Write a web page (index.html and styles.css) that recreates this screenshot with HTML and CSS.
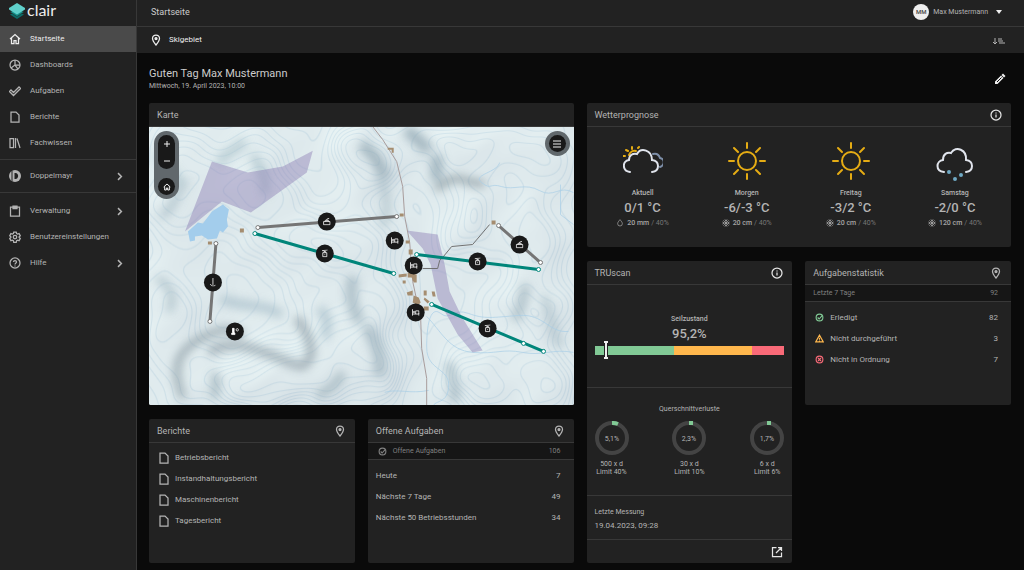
FILE: index.html
```
<!DOCTYPE html>
<html lang="de">
<head>
  <meta charset="UTF-8">
  <meta name="viewport" content="width=device-width, initial-scale=1">
  <title>clair - Startseite</title>
  <link rel="stylesheet" href="styles.css">
</head>
<body>
  <!-- Icons -->
  <svg class="sprite" aria-hidden="true">
    <symbol id="i-home" viewBox="0 0 24 24"><path d="M2 12 12 3l10 9M5 10v11h5v-6h4v6h5V10" /></symbol>
    <symbol id="i-pie" viewBox="0 0 24 24"><circle cx="12" cy="12" r="10" /><path d="M12 2v10l-8 6M12 12h10M12 12l6 8" /></symbol>
    <symbol id="i-check" viewBox="0 0 24 24"><path d="m1 13 3-3 5 5L20 4l3 3L9 21z" /></symbol>
    <symbol id="i-file" viewBox="0 0 24 24"><path d="M4 2h10l6 6v14H4z" /></symbol>
    <symbol id="i-books" viewBox="0 0 24 24"><path d="M2 3h7v18H2zM13 2v20M16 3l6 19" /></symbol>
    <symbol id="i-clip" viewBox="0 0 24 24"><path d="M3 4h18v18H3z" /><path d="M8 2h8v5H8z" fill="currentColor" /></symbol>
    <symbol id="i-gear" viewBox="0 0 24 24"><circle cx="12" cy="12" r="3.5" /><path d="M9.500 2h5l.7 3 2 1.200 3-1 2.300 4.300-2.300 2v1.500l2.300 2-2.300 4.300-3-1-2 1.200-.7 3h-5l-.7-3-2-1.200-3 1L1.500 15l2.300-2v-1.500l-2.300-2 2.300-4.300 3 1 2-1.200z" /></symbol>
    <symbol id="i-help" viewBox="0 0 24 24"><circle cx="12" cy="12" r="10" /><path d="M9 10c0-4 6-4 6 0 0 2-3 2-3 5M12 17v2" /></symbol>
    <symbol id="i-pin" viewBox="0 0 24 24"><path d="M12 22C8 17 5 13 5 9a7 7 0 0 1 14 0c0 4-3 8-7 13z" /><circle cx="12" cy="9" r="2" fill="currentColor" /></symbol>
    <symbol id="i-info" viewBox="0 0 24 24"><circle cx="12" cy="12" r="10" /><path d="M12 11v6M12 7v2" /></symbol>
    <symbol id="i-right" viewBox="0 0 24 24"><path d="m8 3 9 9-9 9" /></symbol>
    <symbol id="i-done" viewBox="0 0 24 24"><circle cx="12" cy="12" r="9" /><path d="m7 12 4 4 8-9" /></symbol>
    <symbol id="i-warn" viewBox="0 0 24 24"><path d="M12 3 2 21h20zM12 10v5M12 17v2" /></symbol>
    <symbol id="i-fail" viewBox="0 0 24 24"><circle cx="12" cy="12" r="9" /><path d="m8 8 8 8M16 8l-8 8" /></symbol>
    <symbol id="i-drop" viewBox="0 0 24 24"><path d="M12 2c4 5 7 8 7 12a7 7 0 0 1-14 0c0-4 3-7 7-12z" /></symbol>
    <symbol id="i-flake" viewBox="0 0 24 24"><path d="M12 1v22M1 12h22M4 4l16 16M20 4 4 20M8 2l4 4 4-4M8 22l4-4 4 4M2 8l4 4-4 4M22 8l-4 4 4 4" /></symbol>
    <symbol id="i-open" viewBox="0 0 24 24"><path d="M11 3H3v18h18v-8M14 3h7v7M21 3 10 14" /></symbol>
    <symbol id="i-sun" viewBox="0 0 40 40"><circle cx="20" cy="20" r="9" /><path d="M20 2v5M20 33v5M2 20h5M33 20h5M7 7l4 4M29 29l4 4M33 7l-4 4M11 29l-4 4" /></symbol>
    <!-- Kartensymbole -->
    <symbol id="m-hotel" viewBox="0 0 10 10"><path d="M1 1v8M1 7h8V3H5v4M9 6v3" /><circle cx="3" cy="4.500" r="1" /></symbol>
    <symbol id="m-gondola" viewBox="0 0 10 10"><path d="M2.500 4h5v5h-5zM4 4V2.500h2V4M1.500 1.500l7-1M5 6v1" /></symbol>
    <symbol id="m-chair" viewBox="0 0 10 10"><path d="M1 5h8v4H1zM3 5V3.500h4V5M5 3.500V2l3-1" /></symbol>
    <symbol id="m-tbar" viewBox="0 0 10 10"><path d="M5 0v8M2 7c0 3 6 3 6 1M4 0h2" /></symbol>
    <symbol id="m-temp" viewBox="0 0 10 10"><path d="M2 1h2v5l1 1v2H1V7l1-1z" fill="#fff" /><circle cx="8" cy="3" r="1.500" /></symbol>
  </svg>

  <div class="app">
    <aside class="sidebar">
      <a class="brand" href="#">
        <svg class="brand-mark" viewBox="0 0 16 16">
          <path d="M1 11.500 8 16l7-4.500-7-3z" fill="#0c6b68" />
          <path d="M1 9 8 13.500 15 9 8 6z" fill="#149089" stroke="#222" stroke-width=".5" />
          <path d="M0 5 8 0l8 5v1.500L8 11.500 0 6.500z" fill="#5fd0cb" />
        </svg>
        <span class="brand-name">clair</span>
      </a>
      <nav>
        <ul class="menu">
          <li><a class="active" href="#"><svg class="icon"><use href="#i-home" /></svg>Startseite</a></li>
          <li><a href="#"><svg class="icon"><use href="#i-pie" /></svg>Dashboards</a></li>
          <li><a href="#"><svg class="icon"><use href="#i-check" /></svg>Aufgaben</a></li>
          <li><a href="#"><svg class="icon"><use href="#i-file" /></svg>Berichte</a></li>
          <li><a href="#"><svg class="icon"><use href="#i-books" /></svg>Fachwissen</a></li>
        </ul>
        <ul class="menu">
          <li><a href="#"><svg class="icon" viewBox="0 0 24 24"><circle cx="12" cy="12" r="12" fill="currentColor" stroke="none" /><path d="M6 1v22" stroke="#222" stroke-width="2" /><path d="M11 6h2c7 0 7 12 0 12h-2z" fill="#222" stroke="none" /></svg>Doppelmayr<svg class="arrow"><use href="#i-right" /></svg></a></li>
        </ul>
        <ul class="menu">
          <li><a href="#"><svg class="icon"><use href="#i-clip" /></svg>Verwaltung<svg class="arrow"><use href="#i-right" /></svg></a></li>
          <li><a href="#"><svg class="icon"><use href="#i-gear" /></svg>Benutzereinstellungen</a></li>
          <li><a href="#"><svg class="icon"><use href="#i-help" /></svg>Hilfe<svg class="arrow"><use href="#i-right" /></svg></a></li>
        </ul>
      </nav>
    </aside>

    <div class="page">
      <header class="topbar">
        <span class="topbar-title">Startseite</span>
        <button class="user" type="button">
          <span class="avatar">MM</span>
          Max Mustermann
          <svg class="caret" viewBox="0 0 6 4"><path d="M0 0h6L3 4z" /></svg>
        </button>
      </header>
      <div class="subbar">
        <button class="region" type="button"><svg class="icon"><use href="#i-pin" /></svg>Skigebiet</button>
        <button class="sort" type="button" aria-label="Sortieren">
          <svg viewBox="0 0 12 10"><path d="M2 3v6M0 7l2 2 2-2" /><path d="M5 4h4M5 6h5M6 8h6" /></svg>
        </button>
      </div>

      <main class="content">
        <div class="welcome">
          <div>
            <h1>Guten Tag Max Mustermann</h1>
            <p>Mittwoch, 19. April 2023, 10:00</p>
          </div>
          <button class="edit" type="button" aria-label="Bearbeiten">
            <svg viewBox="0 0 24 24"><path d="M2 22v-5L14 5l5 5L7 22zM15 4l3-3 5 5-3 3z" fill="currentColor" /><path d="m6 18 9-9" stroke="#0a0a0a" stroke-width="2" /></svg>
          </button>
        </div>

        <div class="grid">
          <section class="card card-map">
            <h2 class="card-head">Karte</h2>
            <div class="map">
              <canvas id="terrain" width="425" height="279"></canvas>
              <svg class="map-layer" viewBox="0 0 425 279" preserveAspectRatio="xMidYMid slice">
                <defs>
                  <filter id="soft" x="-30%" y="-30%" width="160%" height="160%"><feGaussianBlur stdDeviation="5" /></filter>
                </defs>
                <!-- Schattierung -->
                <g class="shade" filter="url(#soft)">
                  <path d="M34 272C22 240 28 225 52 212s34-9 42-4" stroke="#7f9099" stroke-width="7" />
                  <path d="M60 226c20-14 44-5 68 5s28 14 34-2c2-12-4-22-14-38" stroke="#83939c" stroke-width="8" />
                  <path d="M72 172c20 10 50 4 60 18M170 182c10 8 10 14 6 30" stroke="#a2bac6" stroke-width="9" />
                  <path d="M65 272c2-10 4-16 0-26M194 246c-6 14-16 18-26 24" stroke="#93a8b2" stroke-width="8" />
                  <path d="M286 62c12-4 16-12 24-10s14 4 26 6" stroke="#6f7f86" stroke-width="6" />
                  <path d="M212 18c14 8 20 20 24 34M258 2c8 10 16 14 22 22M288 28v26" stroke="#8ba2ae" stroke-width="12" />
                  <path d="M216 200c12 12 18 34 14 50M204 150c-4 20 0 34 8 46" stroke="#9cb1bc" stroke-width="12" />
                  <path d="M300 236c4 16 8 26 6 40M378 158c-6 14-2 20-12 36" stroke="#9fb3bd" stroke-width="10" />
                  <path d="M8 28c14 10 16 26 30 30M96 14c-8 10-20 12-26 22M104 28c8 14 14 22 12 40" stroke="#a7bfc8" stroke-width="9" />
                  <path d="M8 152c16 8 18 20 12 34M12 90c10-4 16-20 20-32" stroke="#a0b6c0" stroke-width="7" />
                  <path d="M234 100c8-20 2-40-4-52M395 170c10 20 8 40 18 50" stroke="#a9bdc6" stroke-width="8" />
                </g>
                <!-- Gewässer -->
                <path class="stream" d="M425 66c-14-8-20 6-34-2s-26 0-38-4-10 4-20-4 16-10 18-20" />
                <path class="stream" d="M420 205c-20 2-24-18-50-16s-34 4-50-2-18 8-28 0-14 10-14 34 24 20 22 40-18 10-16 24" />
                <path class="stream" d="M278 190c14 14 22 34 46 36s30-4 50 0 30-4 51 0M236 266c12-4 26 2 44-2M412 58v30l13 10" />
                <path class="lake" d="m39 105 10-9 5 1 9-12 11-7 6 5-2 10 1 7-5 6-3-2-3 8-9 1-6-4-7 1v4l-5 1z" />
                <!-- Zonen -->
                <path class="zone" d="m63 35 36 11 35-6 30-16-6 22-56 40-29-11-37 30z" />
                <path class="zone" d="m258 104 31 4 7 30 5 27 12 25 21 34-10 2-15-18-20-36-7-34-8-16z" />
                <path class="road" d="M224 0l10 13 14 22 6 25 2 30 5 26 3 39 8 37 1 30 5 30v27" />
                <path class="border" d="M274 142h15l2-8 3-3 9-11 21-2 17-20" />
                <!-- Gebäude -->
                <path class="house" d="M239 21h6v5h-2v-3h-4zM251 87h4v3h-4zM257 114h4v3h-4zM260 123h4v5h-4zM343 94h4v4h-4zM91 102h4v4h-4zM59 115h4v3h-4zM250 148l8-1v3l-8 1zM259 146l9 2v8h-3l-2-5h-4zM254 154h3v3h-3zM258 166l6-2v5h-5zM265 169l5 2 2 5-3 3-5-3zM275 164h3v5h-3zM283 165h3l1 5h-3zM276 171l5 4-2 2-4-4zM275 180h5v4h-5zM262 142h8v3h-8z" />
                <!-- Anlagen -->
                <g class="lift">
                  <path d="M109 101 248 90M67 117l-6 78M350 99l42 37" />
                  <g><circle cx="109" cy="101" r="2" /><circle cx="248" cy="90" r="2" /><circle cx="67" cy="117" r="2" /><circle cx="61" cy="195" r="2" /><circle cx="350" cy="99" r="2" /><circle cx="392" cy="136" r="2" /></g>
                </g>
                <g class="lift lift-open">
                  <path d="m106 107 139 40M268 128l122 15M283 178l112 47" />
                  <g><circle cx="106" cy="107" r="2" /><circle cx="245" cy="147" r="2" /><circle cx="268" cy="128" r="2" /><circle cx="390" cy="143" r="2" /><circle cx="283" cy="178" r="2" /><circle cx="375" cy="217" r="2" /><circle cx="395" cy="225" r="2" /></g>
                </g>
                <g class="marker">
                  <circle cx="178" cy="95" r="9" /><use href="#m-chair" x="174" y="91" width="8" height="8" />
                  <circle cx="176" cy="127" r="9" /><use href="#m-gondola" x="172" y="123" width="8" height="8" />
                  <circle cx="64" cy="156" r="9" /><use href="#m-tbar" x="60" y="152" width="8" height="8" />
                  <circle cx="86" cy="205" r="9" /><use href="#m-temp" x="82" y="201" width="8" height="8" />
                  <circle cx="246" cy="114" r="9" /><use href="#m-hotel" x="242" y="110" width="8" height="8" />
                  <circle cx="265" cy="139" r="9" /><use href="#m-hotel" x="261" y="135" width="8" height="8" />
                  <circle cx="267" cy="186" r="9" /><use href="#m-hotel" x="263" y="182" width="8" height="8" />
                  <circle cx="371" cy="118" r="9" /><use href="#m-chair" x="367" y="114" width="8" height="8" />
                  <circle cx="329" cy="135" r="9" /><use href="#m-gondola" x="325" y="131" width="8" height="8" />
                  <circle cx="339" cy="202" r="9" /><use href="#m-gondola" x="335" y="198" width="8" height="8" />
                </g>
              </svg>
              <div class="map-tools">
                <div class="zoom">
                  <button type="button" aria-label="Vergrößern"><svg viewBox="0 0 6 6"><path d="M3 0v6M0 3h6" /></svg></button>
                  <button type="button" aria-label="Verkleinern"><svg viewBox="0 0 6 6"><path d="M0 3h6" /></svg></button>
                </div>
                <button class="round" type="button" aria-label="Zurücksetzen"><svg class="home"><use href="#i-home" /></svg></button>
              </div>
              <div class="map-tools map-menu">
                <button class="round" type="button" aria-label="Menü"><svg viewBox="0 0 8 8"><path d="M0 1h8M0 4h8M0 7h8" /></svg></button>
              </div>
            </div>
          </section>

          <section class="card card-weather">
            <h2 class="card-head">Wetterprognose <svg class="icon bright"><use href="#i-info" /></svg></h2>
            <div class="forecast">
              <div class="day">
                <svg class="weather" viewBox="0 0 40 40">
                  <path class="sun" d="M6 14a6 6 0 0 1 7-4" />
                  <path class="sun rays" d="M9 6v2M3 9l2 1M0 15h2M15 7l1-1" />
                  <path class="cloud-back" d="M30 13c4-1 6 1 7 4 5 1 5 7 0 9" />
                  <path class="cloud" d="M7 31c-8-1-8-11-1-12 0-5 4-7 8-6 4-7 15-4 15 6 8 1 8 11 0 12" />
                </svg>
                <h3>Aktuell</h3>
                <strong>0/1 °C</strong>
                <p><svg><use href="#i-drop" /></svg><b>20 mm</b> / 40%</p>
              </div>
              <div class="day">
                <svg class="weather sun"><use href="#i-sun" /></svg>
                <h3>Morgen</h3>
                <strong>-6/-3 °C</strong>
                <p><svg><use href="#i-flake" /></svg><b>20 cm</b> / 40%</p>
              </div>
              <div class="day">
                <svg class="weather sun"><use href="#i-sun" /></svg>
                <h3>Freitag</h3>
                <strong>-3/2 °C</strong>
                <p><svg><use href="#i-flake" /></svg><b>20 cm</b> / 40%</p>
              </div>
              <div class="day">
                <svg class="weather" viewBox="0 0 40 40">
                  <path class="cloud" d="M9 31c-9-1-8-11-1-12 0-6 4-8 8-7 5-8 16-3 15 7 8 1 8 11 0 12" />
                  <g class="snow"><circle cx="14" cy="31" r="1" /><circle cx="26" cy="34" r="1" /><circle cx="20" cy="38" r="1" /></g>
                </svg>
                <h3>Samstag</h3>
                <strong>-2/0 °C</strong>
                <p><svg><use href="#i-flake" /></svg><b>120 cm</b> / 40%</p>
              </div>
            </div>
          </section>

          <section class="card card-scan">
            <h2 class="card-head">TRUscan <svg class="icon bright"><use href="#i-info" /></svg></h2>
            <div class="rope">
              <h3>Seilzustand</h3>
              <strong>95,2%</strong>
              <div class="scale">
                <span class="good"></span><span class="medium"></span><span class="bad"></span>
                <svg class="pointer" viewBox="0 0 6 18"><path d="M1 1h4M1 17h4M3 1v16" stroke="#222" stroke-width="4" /><path d="M1 1h4M1 17h4M3 1v16" stroke="#eee" stroke-width="2" /></svg>
              </div>
            </div>
            <div class="losses">
              <h3>Querschnittverluste</h3>
              <div class="rings">
                <div class="loss">
                  <svg viewBox="0 0 34 34"><circle cx="17" cy="17" r="15" /><path d="M17 2a15 15 0 0 1 6 1" /><text x="17" y="20">5,1%</text></svg>
                  <p>500 x d<br>Limit 40%</p>
                </div>
                <div class="loss">
                  <svg viewBox="0 0 34 34"><circle cx="17" cy="17" r="15" /><path d="M17 2h4" /><text x="17" y="20">2,3%</text></svg>
                  <p>30 x d<br>Limit 10%</p>
                </div>
                <div class="loss">
                  <svg viewBox="0 0 34 34"><circle cx="17" cy="17" r="15" /><path d="M17 2h4" /><text x="17" y="20">1,7%</text></svg>
                  <p>6 x d<br>Limit 6%</p>
                </div>
              </div>
            </div>
            <div class="measured">
              <h3>Letzte Messung</h3>
              <p>19.04.2023, 09:28</p>
            </div>
            <footer class="card-foot">
              <a href="#" aria-label="TRUscan öffnen"><svg class="icon bright"><use href="#i-open" /></svg></a>
            </footer>
          </section>

          <section class="card">
            <h2 class="card-head">Aufgabenstatistik <svg class="icon"><use href="#i-pin" /></svg></h2>
            <div class="card-sub"><span>Letzte 7 Tage</span><span>92</span></div>
            <table>
              <tr><th scope="row"><svg class="state ok"><use href="#i-done" /></svg>Erledigt</th><td>82</td></tr>
              <tr><th scope="row"><svg class="state warn"><use href="#i-warn" /></svg>Nicht durchgeführt</th><td>3</td></tr>
              <tr><th scope="row"><svg class="state fail"><use href="#i-fail" /></svg>Nicht in Ordnung</th><td>7</td></tr>
            </table>
          </section>

          <section class="card">
            <h2 class="card-head">Berichte <svg class="icon"><use href="#i-pin" /></svg></h2>
            <ul class="reports">
              <li><a href="#"><svg class="icon"><use href="#i-file" /></svg>Betriebsbericht</a></li>
              <li><a href="#"><svg class="icon"><use href="#i-file" /></svg>Instandhaltungsbericht</a></li>
              <li><a href="#"><svg class="icon"><use href="#i-file" /></svg>Maschinenbericht</a></li>
              <li><a href="#"><svg class="icon"><use href="#i-file" /></svg>Tagesbericht</a></li>
            </ul>
          </section>

          <section class="card">
            <h2 class="card-head">Offene Aufgaben <svg class="icon"><use href="#i-pin" /></svg></h2>
            <div class="card-sub"><svg class="state"><use href="#i-done" /></svg><span>Offene Aufgaben</span><span>106</span></div>
            <table>
              <tr><th scope="row">Heute</th><td>7</td></tr>
              <tr><th scope="row">Nächste 7 Tage</th><td>49</td></tr>
              <tr><th scope="row">Nächste 50 Betriebsstunden</th><td>34</td></tr>
            </table>
          </section>
        </div>
      </main>
    </div>
  </div>

  <script src="terrain.js"></script>
</body>
</html>
```
FILE: styles.css
```
* {
  box-sizing: border-box;
}

body {
  margin: 0;
  background: #0a0a0a;
  color: #b4b4b4;
  font-family: Roboto, "Liberation Sans", sans-serif;
  font-size: 8px;
  line-height: 12px;
}

h1, h2, h3, p, ul {
  margin: 0;
  padding: 0;
  font-weight: 400;
}

ul {
  list-style: none;
}

a {
  color: inherit;
  text-decoration: none;
}

button {
  padding: 0;
  border: 0;
  background: none;
  color: inherit;
  font: inherit;
  cursor: pointer;
}

svg {
  display: block;
  flex: none;
  fill: none;
  stroke: currentColor;
  stroke-width: 2;
}

.sprite {
  position: absolute;
  width: 0;
  height: 0;
}

.icon {
  width: 12px;
  height: 12px;
  stroke-width: 2.5;
}

.bright {
  color: #e6e6e6;
}

.app {
  display: flex;
  min-height: 100vh;
}

/* Seitenleiste */
.sidebar {
  flex: none;
  width: 137px;
  background: #222;
  border-right: 1px solid #383838;
}

.brand {
  display: flex;
  align-items: center;
  gap: 2px;
  height: 26px;
  padding: 0 0 4px 9px;
  color: #eee;
}

.brand-mark {
  width: 16px;
  height: 16px;
  stroke: none;
}

.brand-name {
  padding-bottom: 2px;
  font-family: Lato, sans-serif;
  font-size: 16px;
  line-height: 16px;
}

.menu {
  padding: 3px 0;
  border-bottom: 1px solid #383838;
}

.menu:first-child {
  padding-top: 0;
}

.menu:last-child {
  padding-top: 5px;
  border-bottom: 0;
}

.menu a {
  display: flex;
  align-items: center;
  gap: 9px;
  height: 26px;
  padding: 0 12px 0 9px;
}

.menu .active {
  background: #4a4a4a;
  color: #eee;
}

.arrow {
  width: 9px;
  height: 9px;
  margin-left: auto;
  stroke-width: 4;
}

/* Kopfzeilen */
.page {
  flex: 1;
  min-width: 0;
}

.topbar,
.subbar {
  display: flex;
  align-items: center;
  justify-content: space-between;
  height: 26px;
  padding: 0 22px 0 14px;
  background: #222;
}

.topbar {
  height: 27px;
  padding-bottom: 2px;
  border-bottom: 1px solid #383838;
}

.topbar-title {
  color: #ccc;
  font-size: 9px;
}

.user {
  display: flex;
  align-items: center;
  gap: 4px;
  font-size: 7px;
}

.avatar {
  width: 16px;
  height: 16px;
  border-radius: 50%;
  background: #eee;
  color: #444;
  font-size: 6px;
  font-weight: 500;
  line-height: 16px;
}

.caret {
  width: 6px;
  height: 4px;
  margin-left: 4px;
  fill: #eee;
  stroke: none;
}

.region {
  display: flex;
  align-items: center;
  gap: 7px;
  color: #eee;
}

.region .icon {
  margin-left: -1px;
}

.sort svg {
  width: 12px;
  height: 10px;
  margin-right: -3px;
  stroke-width: 1;
}

/* Inhalt */
.content {
  padding: 14px 13px 7px 12px;
}

.welcome {
  display: flex;
  justify-content: space-between;
  align-items: center;
  height: 24px;
  margin-bottom: 12px;
  padding-right: 5px;
}

.welcome h1 {
  color: #ccc;
  font-size: 11px;
  line-height: 14px;
}

.welcome p {
  font-size: 7px;
  line-height: 10px;
}

.edit svg {
  width: 12px;
  height: 12px;
  color: #eee;
  stroke: none;
}

.grid {
  display: grid;
  grid-template-columns: repeat(4, minmax(0, 1fr));
  grid-auto-rows: minmax(144px, auto);
  gap: 14px 13px;
}

.card {
  display: flex;
  flex-direction: column;
  background: #222;
  border-radius: 2px;
  overflow: hidden;
}

.card-map {
  grid-column: span 2;
  grid-row: span 2;
}

.card-weather {
  grid-column: span 2;
}

.card-scan {
  grid-row: span 2;
}

.card-head {
  display: flex;
  align-items: center;
  justify-content: space-between;
  flex: none;
  height: 24px;
  padding: 0 9px 0 8px;
  border-bottom: 1px solid #383838;
  font-size: 9px;
}

.card-sub {
  display: flex;
  align-items: center;
  gap: 6px;
  height: 17px;
  padding: 0 13px 0 8px;
  background: #161616;
  border-bottom: 1px solid #383838;
  color: #808080;
  font-size: 7px;
}

.card-sub span:last-child {
  margin-left: auto;
}

.card-sub .state {
  margin-left: 2px;
}

.state {
  width: 9px;
  height: 9px;
  stroke-width: 3;
}

.ok { color: #81c995; }
.warn { color: #ffb74d; }
.fail { color: #f96a78; }

table {
  width: 100%;
  margin-top: 5px;
  border-collapse: collapse;
}

th, td {
  height: 21px;
  padding: 0 13px 0 8px;
  font-weight: 400;
  text-align: left;
}

td {
  text-align: right;
}

th .state {
  display: inline-block;
  margin: 0 6px 0 2px;
  vertical-align: -2px;
}

.reports {
  padding: 4px 9px;
}

.reports a {
  display: flex;
  align-items: center;
  gap: 5px;
  height: 21px;
}

/* Karte */
.map {
  position: relative;
  flex: 1;
  background: #dfe9ec;
}

#terrain,
.map-layer {
  position: absolute;
  width: 100%;
  height: 100%;
}

.shade {
  opacity: .7;
}

.stream {
  stroke: #a9cfe6;
  stroke-width: 1;
  opacity: .7;
}

.lake {
  fill: #a3cdec;
  stroke: none;
}

.zone {
  fill: #8878b0;
  fill-opacity: .42;
  stroke: none;
}

.road {
  stroke: #a89c9c;
  stroke-width: 1;
}

.border {
  stroke: #707070;
  stroke-width: 1;
}

.house {
  fill: #a58d70;
  stroke: none;
}

.lift {
  stroke: #757575;
  stroke-width: 3;
}

.lift-open {
  stroke: #00857a;
}

.lift circle {
  fill: #fff;
  stroke-width: 1;
}

.marker {
  color: #fff;
  stroke-width: 1;
}

.marker circle {
  fill: #191919;
  stroke: none;
}

.map-tools {
  position: absolute;
  top: 4px;
  left: 5px;
  padding: 4px;
  border-radius: 13px;
  background: #61686c;
}

.map-menu {
  left: auto;
  right: 4px;
}

.map-tools button {
  display: flex;
  align-items: center;
  justify-content: center;
  width: 17px;
  height: 17px;
  color: #eee;
}

.map-tools svg {
  width: 6px;
  height: 6px;
  stroke-width: 1;
}

.map-tools .home {
  width: 8px;
  height: 8px;
  stroke-width: 3;
}

.map-menu svg {
  width: 8px;
  height: 8px;
}

.zoom {
  margin-bottom: 9px;
  border-radius: 9px;
  background: #191919;
}

.round {
  border-radius: 50%;
  background: #191919;
}

/* Wetter */
.forecast {
  display: grid;
  grid-template-columns: repeat(4, 1fr);
  padding: 14px 4px 13px;
}

.day {
  display: flex;
  flex-direction: column;
  align-items: center;
}

.weather {
  width: 40px;
  height: 40px;
  margin-bottom: 6px;
  stroke-linecap: round;
}

.sun { stroke: #e5ac14; }
.cloud { stroke: #e0e4ec; }
.cloud-back { stroke: #7d8ea8; }

.snow {
  stroke: #6fa9c4;
}

.day h3,
.rope h3 {
  font-size: 7px;
  font-weight: 500;
}

.day strong,
.rope strong {
  font-size: 13px;
  font-weight: 500;
  line-height: 18px;
}

.day p {
  display: flex;
  align-items: center;
  gap: 2px;
  color: #777;
  font-size: 7px;
}

.day p svg {
  width: 8px;
  height: 8px;
  margin-right: 1px;
  color: #b4b4b4;
}

.day b {
  color: #a6a6a6;
  font-weight: 500;
}

/* TRUscan */
.rope {
  flex: 1;
  padding: 28px 8px;
  text-align: center;
}

.scale {
  position: relative;
  display: flex;
  height: 9px;
  margin-top: 3px;
}

.good { flex: 42; background: #81c995; }
.medium { flex: 41; background: #ffb74d; }
.bad { flex: 17; background: #f96a78; }

.pointer {
  position: absolute;
  top: -5px;
  left: 8px;
  width: 6px;
  height: 18px;
}

.losses {
  height: 108px;
  padding: 15px 8px 0;
  border-top: 1px solid #383838;
  font-size: 7px;
  text-align: center;
}

.losses h3 {
  font-size: 7px;
}

.rings {
  display: flex;
  justify-content: space-between;
  margin-top: 6px;
}

.loss {
  width: 34px;
}

.loss svg {
  width: 34px;
  height: 34px;
  margin-bottom: 5px;
  stroke-width: 4;
}

.loss circle { stroke: #444; }
.loss path { stroke: #81c995; }

.loss text {
  fill: currentColor;
  stroke: none;
  text-anchor: middle;
}

.loss p {
  line-height: 8px;
  white-space: nowrap;
}

.measured {
  height: 44px;
  padding: 10px 8px 0;
  border-top: 1px solid #383838;
}

.measured h3 {
  font-size: 7px;
}

.measured p {
  line-height: 16px;
}

.card-foot {
  display: flex;
  align-items: center;
  justify-content: flex-end;
  height: 24px;
  padding: 0 9px;
  border-top: 1px solid #383838;
}
```
FILE: terrain.js
```
// Hügel: x, y, Breite, Höhe, Gewicht
const hills = [
  [30, 60, 40, 60, 7], [105, 60, 45, 50, 8], [175, 120, 60, 40, 9],
  [20, 190, 35, 50, 6], [110, 255, 80, 35, 10], [175, 215, 40, 50, 7],
  [225, 215, 30, 70, 9], [300, 20, 50, 30, 7], [390, 20, 50, 40, 6],
  [215, 30, 30, 45, 8], [320, 90, 30, 45, 8], [385, 110, 35, 50, 7],
  [330, 250, 35, 45, 8], [395, 260, 35, 60, 8], [380, 180, 35, 30, 6]
];

function heightAt(x, y) {
  const wx = x + 5 * Math.sin(y / 11 + x / 31) + 3 * Math.sin(x / 9 - y / 17);
  const wy = y + 5 * Math.sin(x / 13 - y / 29) + 2 * Math.sin(y / 7 + x / 8);
  let h = 0;
  for (const [cx, cy, rx, ry, a] of hills) {
    h += a * Math.exp(-(((wx - cx) / rx) ** 2) - ((wy - cy) / ry) ** 2);
  }
  return h;
}

const canvas = document.getElementById("terrain");
const ctx = canvas.getContext("2d");
const image = ctx.createImageData(canvas.width, canvas.height);

for (let y = 0; y < canvas.height; y++) {
  for (let x = 0; x < canvas.width; x++) {
    const h = heightAt(x, y);
    const dx = heightAt(x + 1, y) - h;
    const dy = heightAt(x, y + 1) - h;
    const light = Math.max(-24, Math.min(8, (dx + dy) * 26));

    // Höhenlinien
    const level = h / 0.9;
    const dist = Math.abs(level - Math.round(level)) / (Math.hypot(dx, dy) / 0.9 + 0.01);
    const line = Math.max(0, 1 - dist) * 13;

    const i = (y * canvas.width + x) * 4;
    image.data[i] = 223 + light - line * 1.4;
    image.data[i + 1] = 234 + light - line * 0.9;
    image.data[i + 2] = 237 + light * 0.8 - line * 0.5;
    image.data[i + 3] = 255;
  }
}

ctx.putImageData(image, 0, 0);
```
